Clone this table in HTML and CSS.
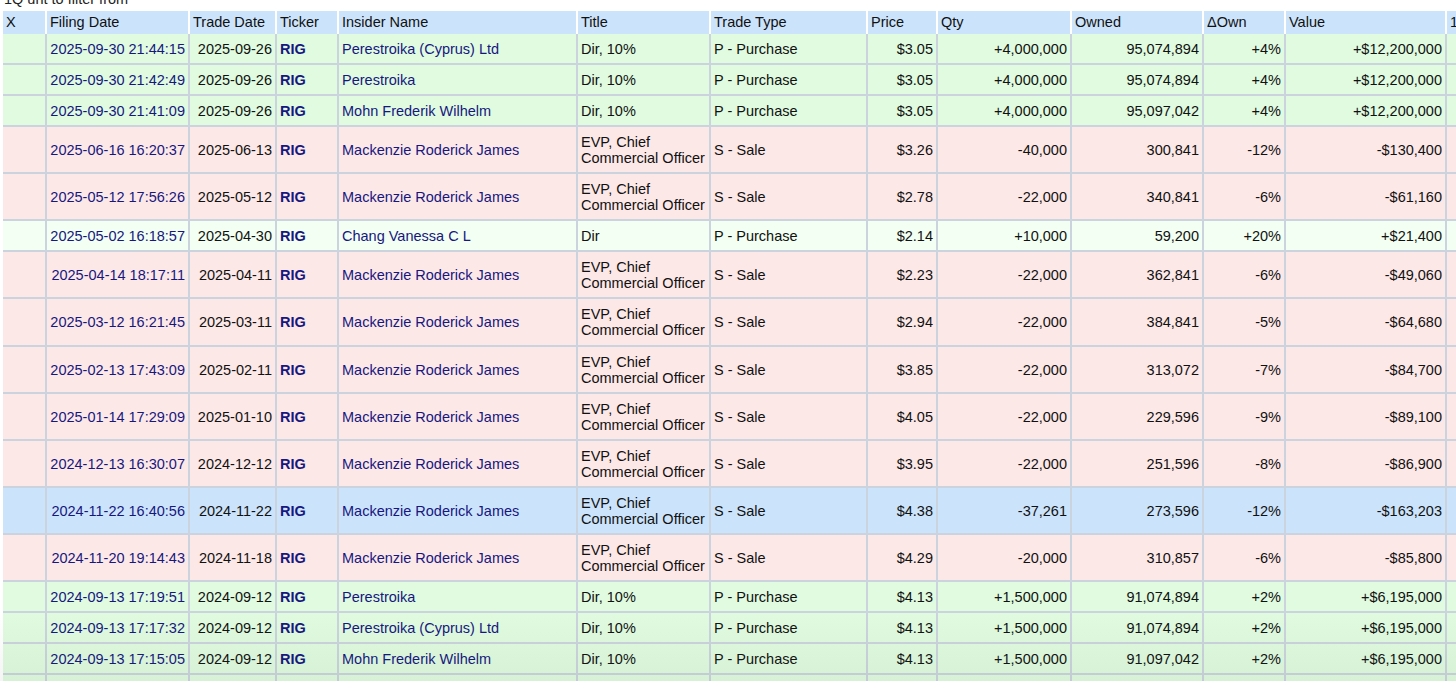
FILE: index.html
```html
<!DOCTYPE html>
<html>
<head>
<meta charset="utf-8">
<link rel="stylesheet" href="styles.css">
</head>
<body>
<div class="caption"><span>1Q unt to filter from</span></div>
<table class="tinytable">
<thead>
<tr>
<th class="c-x">X</th>
<th class="c-fd">Filing Date</th>
<th class="c-td">Trade Date</th>
<th class="c-tk">Ticker</th>
<th class="c-in">Insider Name</th>
<th class="c-ti">Title</th>
<th class="c-tt">Trade Type</th>
<th class="c-pr">Price</th>
<th class="c-qt">Qty</th>
<th class="c-ow">Owned</th>
<th class="c-do">ΔOwn</th>
<th class="c-va">Value</th>
<th class="c-ex">1</th>
</tr>
</thead>
<tbody>
<tr class="buy"><td></td><td class="r link">2025-09-30 21:44:15</td><td class="r">2025-09-26</td><td class="tick">RIG</td><td class="link">Perestroika (Cyprus) Ltd</td><td>Dir, 10%</td><td>P - Purchase</td><td class="r">$3.05</td><td class="r">+4,000,000</td><td class="r">95,074,894</td><td class="r">+4%</td><td class="r">+$12,200,000</td><td></td></tr>
<tr class="buy"><td></td><td class="r link">2025-09-30 21:42:49</td><td class="r">2025-09-26</td><td class="tick">RIG</td><td class="link">Perestroika</td><td>Dir, 10%</td><td>P - Purchase</td><td class="r">$3.05</td><td class="r">+4,000,000</td><td class="r">95,074,894</td><td class="r">+4%</td><td class="r">+$12,200,000</td><td></td></tr>
<tr class="buy"><td></td><td class="r link">2025-09-30 21:41:09</td><td class="r">2025-09-26</td><td class="tick">RIG</td><td class="link">Mohn Frederik Wilhelm</td><td>Dir, 10%</td><td>P - Purchase</td><td class="r">$3.05</td><td class="r">+4,000,000</td><td class="r">95,097,042</td><td class="r">+4%</td><td class="r">+$12,200,000</td><td></td></tr>
<tr class="sell"><td></td><td class="r link">2025-06-16 16:20:37</td><td class="r">2025-06-13</td><td class="tick">RIG</td><td class="link">Mackenzie Roderick James</td><td>EVP, Chief<br>Commercial Officer</td><td>S - Sale</td><td class="r">$3.26</td><td class="r">-40,000</td><td class="r">300,841</td><td class="r">-12%</td><td class="r">-$130,400</td><td></td></tr>
<tr class="sell"><td></td><td class="r link">2025-05-12 17:56:26</td><td class="r">2025-05-12</td><td class="tick">RIG</td><td class="link">Mackenzie Roderick James</td><td>EVP, Chief<br>Commercial Officer</td><td>S - Sale</td><td class="r">$2.78</td><td class="r">-22,000</td><td class="r">340,841</td><td class="r">-6%</td><td class="r">-$61,160</td><td></td></tr>
<tr class="buy-light"><td></td><td class="r link">2025-05-02 16:18:57</td><td class="r">2025-04-30</td><td class="tick">RIG</td><td class="link">Chang Vanessa C L</td><td>Dir</td><td>P - Purchase</td><td class="r">$2.14</td><td class="r">+10,000</td><td class="r">59,200</td><td class="r">+20%</td><td class="r">+$21,400</td><td></td></tr>
<tr class="sell"><td></td><td class="r link">2025-04-14 18:17:11</td><td class="r">2025-04-11</td><td class="tick">RIG</td><td class="link">Mackenzie Roderick James</td><td>EVP, Chief<br>Commercial Officer</td><td>S - Sale</td><td class="r">$2.23</td><td class="r">-22,000</td><td class="r">362,841</td><td class="r">-6%</td><td class="r">-$49,060</td><td></td></tr>
<tr class="sell"><td></td><td class="r link">2025-03-12 16:21:45</td><td class="r">2025-03-11</td><td class="tick">RIG</td><td class="link">Mackenzie Roderick James</td><td>EVP, Chief<br>Commercial Officer</td><td>S - Sale</td><td class="r">$2.94</td><td class="r">-22,000</td><td class="r">384,841</td><td class="r">-5%</td><td class="r">-$64,680</td><td></td></tr>
<tr class="sell"><td></td><td class="r link">2025-02-13 17:43:09</td><td class="r">2025-02-11</td><td class="tick">RIG</td><td class="link">Mackenzie Roderick James</td><td>EVP, Chief<br>Commercial Officer</td><td>S - Sale</td><td class="r">$3.85</td><td class="r">-22,000</td><td class="r">313,072</td><td class="r">-7%</td><td class="r">-$84,700</td><td></td></tr>
<tr class="sell"><td></td><td class="r link">2025-01-14 17:29:09</td><td class="r">2025-01-10</td><td class="tick">RIG</td><td class="link">Mackenzie Roderick James</td><td>EVP, Chief<br>Commercial Officer</td><td>S - Sale</td><td class="r">$4.05</td><td class="r">-22,000</td><td class="r">229,596</td><td class="r">-9%</td><td class="r">-$89,100</td><td></td></tr>
<tr class="sell"><td></td><td class="r link">2024-12-13 16:30:07</td><td class="r">2024-12-12</td><td class="tick">RIG</td><td class="link">Mackenzie Roderick James</td><td>EVP, Chief<br>Commercial Officer</td><td>S - Sale</td><td class="r">$3.95</td><td class="r">-22,000</td><td class="r">251,596</td><td class="r">-8%</td><td class="r">-$86,900</td><td></td></tr>
<tr class="hover"><td></td><td class="r link">2024-11-22 16:40:56</td><td class="r">2024-11-22</td><td class="tick">RIG</td><td class="link">Mackenzie Roderick James</td><td>EVP, Chief<br>Commercial Officer</td><td>S - Sale</td><td class="r">$4.38</td><td class="r">-37,261</td><td class="r">273,596</td><td class="r">-12%</td><td class="r">-$163,203</td><td></td></tr>
<tr class="sell"><td></td><td class="r link">2024-11-20 19:14:43</td><td class="r">2024-11-18</td><td class="tick">RIG</td><td class="link">Mackenzie Roderick James</td><td>EVP, Chief<br>Commercial Officer</td><td>S - Sale</td><td class="r">$4.29</td><td class="r">-20,000</td><td class="r">310,857</td><td class="r">-6%</td><td class="r">-$85,800</td><td></td></tr>
<tr class="buy"><td></td><td class="r link">2024-09-13 17:19:51</td><td class="r">2024-09-12</td><td class="tick">RIG</td><td class="link">Perestroika</td><td>Dir, 10%</td><td>P - Purchase</td><td class="r">$4.13</td><td class="r">+1,500,000</td><td class="r">91,074,894</td><td class="r">+2%</td><td class="r">+$6,195,000</td><td></td></tr>
<tr class="buy"><td></td><td class="r link">2024-09-13 17:17:32</td><td class="r">2024-09-12</td><td class="tick">RIG</td><td class="link">Perestroika (Cyprus) Ltd</td><td>Dir, 10%</td><td>P - Purchase</td><td class="r">$4.13</td><td class="r">+1,500,000</td><td class="r">91,074,894</td><td class="r">+2%</td><td class="r">+$6,195,000</td><td></td></tr>
<tr class="buy"><td></td><td class="r link">2024-09-13 17:15:05</td><td class="r">2024-09-12</td><td class="tick">RIG</td><td class="link">Mohn Frederik Wilhelm</td><td>Dir, 10%</td><td>P - Purchase</td><td class="r">$4.13</td><td class="r">+1,500,000</td><td class="r">91,097,042</td><td class="r">+2%</td><td class="r">+$6,195,000</td><td></td></tr>
<tr class="buy"><td></td><td class="r link">&nbsp;</td><td></td><td></td><td></td><td></td><td></td><td></td><td></td><td></td><td></td><td></td><td></td></tr>
</tbody>
</table>
<div class="shade"></div>
</body>
</html>
```

FILE: styles.css
```css
html, body {
  margin: 0;
  padding: 0;
  background: #ffffff;
  overflow: hidden;
  height: 681px;
}
body {
  font-family: "Liberation Sans", Arial, Helvetica, sans-serif;
  font-size: 14.5px;
  color: #111111;
  position: relative;
}
.caption {
  height: 11px;
  overflow: hidden;
  padding-left: 4px;
}
.caption span {
  display: block;
  line-height: 16px;
  margin-top: -9px;
  color: #222;
}
.tinytable {
  table-layout: fixed;
  border-collapse: separate;
  border-spacing: 0;
  margin-left: 3px;
  width: 1500px;
}
.tinytable th {
  box-sizing: border-box;
  background: #cce4fb;
  font-weight: normal;
  text-align: left;
  line-height: 16px;
  padding: 3px 3px 4px 3px;
  border-right: 2px solid #ffffff;
  white-space: nowrap;
  overflow: hidden;
  color: #111;
}
.c-x { width: 44px; }
.c-fd { width: 143px; }
.c-td { width: 87px; }
.c-tk { width: 62px; }
.c-in { width: 239px; }
.c-ti { width: 133px; }
.c-tt { width: 157px; }
.c-pr { width: 70px; }
.c-qt { width: 134px; }
.c-ow { width: 132px; }
.c-do { width: 82px; }
.c-va { width: 161px; }
.c-ex { width: 56px; }

.tinytable td {
  box-sizing: border-box;
  line-height: 16px;
  padding: 7px 3px 6px 3px;
  border-right: 2px solid #cbd3de;
  border-bottom: 2px solid #cbd3de;
  white-space: nowrap;
  overflow: hidden;
  vertical-align: middle;
}
.tinytable td.r { text-align: right; }
.tinytable td.link { color: #17177f; }
.tinytable td.tick { color: #17177f; font-weight: bold; }

tr.buy td { background: #e0fbe0; }
tr.buy-light td { background: #f2fff2; }
tr.sell td { background: #fde8e8; padding-bottom: 6.17px; }
tr.hover td { background: #cce4fb; padding-bottom: 6.17px; }

.shade {
  position: absolute;
  left: 0;
  right: 0;
  top: 610px;
  height: 71px;
  pointer-events: none;
  background: linear-gradient(to bottom, rgba(0,0,0,0) 0%, rgba(60,80,60,0.06) 100%);
}
```
